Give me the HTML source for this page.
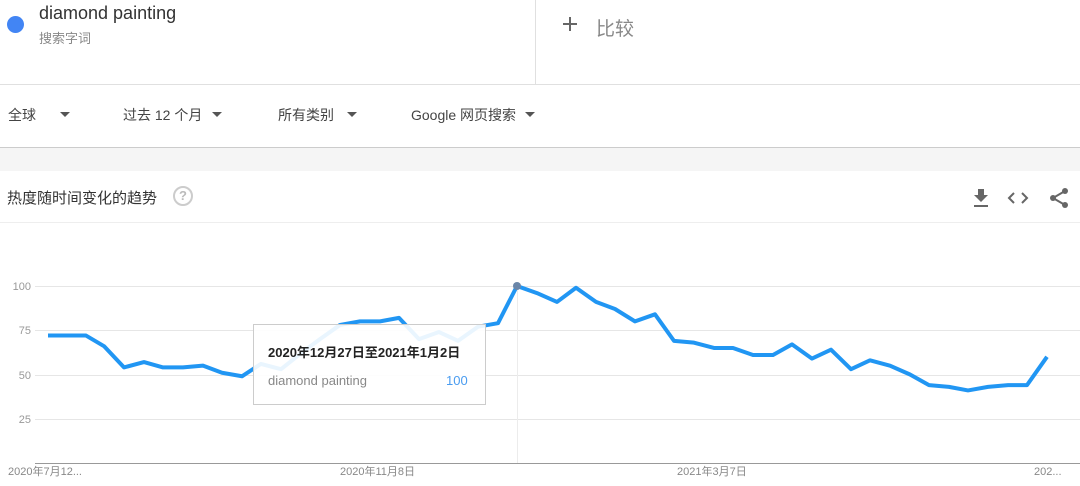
<!DOCTYPE html>
<html><head><meta charset="utf-8"><style>
body{margin:0;width:1080px;height:486px;overflow:hidden;background:#fff;font-family:"Liberation Sans","Noto Sans CJK SC",sans-serif;position:relative}
.a{position:absolute}
.t{position:absolute;top:112px;width:0;height:0;border-left:5px solid transparent;border-right:5px solid transparent;border-top:5px solid #555}
</style></head><body>
<div class="a" style="left:0;top:0;width:1080px;height:84px;border-bottom:1px solid #e0e0e0"></div>
<div class="a" style="left:535px;top:0;width:1px;height:84px;background:#e0e0e0"></div>
<div class="a" style="left:7px;top:16px;width:17px;height:17px;border-radius:50%;background:#4285f4"></div>
<div class="a" style="left:39px;top:3px;font-size:18px;color:#333">diamond painting</div>
<div class="a" style="left:39px;top:28px;font-size:13px;color:#888">搜索字词</div>
<div class="a" style="left:563px;top:16px;width:14px;height:2px;background:#666;margin-top:7px"></div>
<div class="a" style="left:569px;top:17px;width:2px;height:14px;background:#666"></div>
<div class="a" style="left:596px;top:14px;font-size:19px;color:#888">比较</div>
<div class="a" style="left:0;top:105px;font-size:14px;color:#444;width:1080px">
<span class="a" style="left:8px">全球</span>
<span class="a" style="left:123px">过去 12 个月</span>
<span class="a" style="left:278px">所有类别</span>
<span class="a" style="left:411px">Google 网页搜索</span>
</div>
<div class="t" style="left:60px"></div><div class="t" style="left:212px"></div><div class="t" style="left:347px"></div><div class="t" style="left:525px"></div>
<div class="a" style="left:0;top:147px;width:1080px;height:23px;background:#f5f5f5;border-top:1px solid #ccc"></div>
<div class="a" style="left:0;top:170px;width:1080px;height:52px;border-bottom:1px solid #eee"></div>
<div class="a" style="left:7px;top:187px;font-size:15px;color:#333">热度随时间变化的趋势</div>
<div class="a" style="left:173px;top:186px;width:16px;height:16px;border:2px solid #ccc;border-radius:50%;color:#bbb;font-size:13px;text-align:center;line-height:16px;font-weight:bold">?</div>
<svg class="a" style="left:970px;top:186px" width="100" height="24">
<path d="M8 3h6v6h4l-7 7-7-7h4z M4 19h14v2H4z" fill="#666"/>
<path d="M44 7l-5 5 5 5M52 7l5 5-5 5" stroke="#666" stroke-width="2" fill="none"/>
<circle cx="95" cy="5" r="3" fill="#666"/><circle cx="83" cy="12" r="3" fill="#666"/><circle cx="95" cy="19" r="3" fill="#666"/>
<path d="M95 5L83 12 95 19" stroke="#666" stroke-width="2" fill="none"/>
</svg>
<svg class="a" style="left:0;top:270px" width="1080" height="216">
<g stroke="#e6e6e6" stroke-width="1"><line x1="35" x2="1080" y1="16.5" y2="16.5"/><line x1="35" x2="1080" y1="60.5" y2="60.5"/><line x1="35" x2="1080" y1="105.5" y2="105.5"/><line x1="35" x2="1080" y1="149.5" y2="149.5"/></g>
<line x1="35" x2="1080" y1="193.5" y2="193.5" stroke="#999"/>
<line x1="517.5" x2="517.5" y1="16" y2="193" stroke="#ececec"/>
<g font-size="11" fill="#999" text-anchor="end"><text x="31" y="20">100</text><text x="31" y="64">75</text><text x="31" y="109">50</text><text x="31" y="153">25</text></g>
<g font-size="11" fill="#888"><text x="8" y="205">2020年7月12...</text><text x="340" y="205">2020年11月8日</text><text x="677" y="205">2021年3月7日</text><text x="1034" y="205">202...</text></g>
<g transform="translate(0,193) scale(1,-1.77)">
<polyline vector-effect="non-scaling-stroke" fill="none" stroke="#2196f3" stroke-width="4" stroke-linejoin="round" points="48,72 67,72 86,72 104,66 124,54 144,57 163,54 183,54 203,55 222,51 242,49 261,56 281,53 301,62 320,70 340,78 360,80 380,80 399,82 419,70 439,74 458,69 478,77 498,79 517,100 537,96 557,91 576,99 596,91 615,87 635,80 655,84 674,69 694,68 714,65 733,65 753,61 773,61 792,67 812,59 831,64 851,53 870,58 890,55 910,50 929,44 949,43 968,41 988,43 1008,44 1027,44 1047,60"/>
</g>
<circle cx="517" cy="16" r="4" fill="#6b86a8"/>
</svg>
<div class="a" style="left:253px;top:324px;width:231px;height:79px;border:1px solid #ccc;background:rgba(255,255,255,.9)"></div>
<div class="a" style="left:268px;top:342px;font-size:13px;color:#222;font-weight:bold">2020年12月27日至2021年1月2日</div>
<div class="a" style="left:268px;top:373px;font-size:13px;color:#888">diamond painting</div>
<div class="a" style="left:446px;top:373px;font-size:13px;color:#4a9cf0">100</div>
</body></html>
